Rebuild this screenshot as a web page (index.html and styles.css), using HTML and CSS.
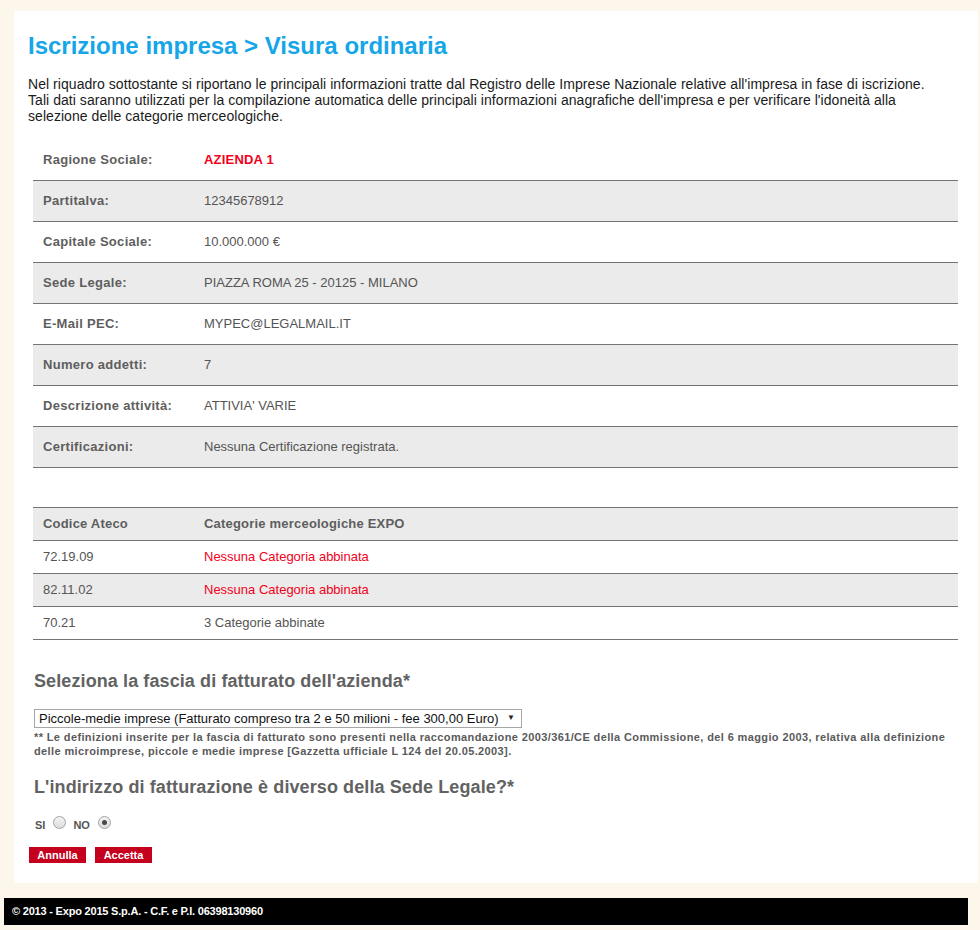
FILE: index.html
```html
<!DOCTYPE html>
<html lang="it">
<head>
<meta charset="utf-8">
<title>Iscrizione impresa &gt; Visura ordinaria</title>
<link rel="stylesheet" href="styles.css">
</head>
<body>
<div class="page">
  <div class="panel">
    <h1 class="title">Iscrizione impresa &gt; Visura ordinaria</h1>
    <p class="intro">Nel riquadro sottostante si riportano le principali informazioni tratte dal Registro delle Imprese Nazionale relative all'impresa in fase di iscrizione.<br>Tali dati saranno utilizzati per la compilazione automatica delle principali informazioni anagrafiche dell'impresa e per verificare l'idoneità alla selezione delle categorie merceologiche.</p>

    <table class="info">
      <tr><th>Ragione Sociale:</th><td class="red bold">AZIENDA 1</td></tr>
      <tr class="alt"><th>Partitalva:</th><td>12345678912</td></tr>
      <tr><th>Capitale Sociale:</th><td>10.000.000 €</td></tr>
      <tr class="alt"><th>Sede Legale:</th><td>PIAZZA ROMA 25 - 20125 - MILANO</td></tr>
      <tr><th>E-Mail PEC:</th><td>MYPEC@LEGALMAIL.IT</td></tr>
      <tr class="alt"><th>Numero addetti:</th><td>7</td></tr>
      <tr><th>Descrizione attività:</th><td>ATTIVIA' VARIE</td></tr>
      <tr class="alt"><th>Certificazioni:</th><td>Nessuna Certificazione registrata.</td></tr>
    </table>

    <table class="ateco">
      <tr class="head"><th>Codice Ateco</th><th>Categorie merceologiche EXPO</th></tr>
      <tr><td>72.19.09</td><td class="red">Nessuna Categoria abbinata</td></tr>
      <tr class="alt"><td>82.11.02</td><td class="red">Nessuna Categoria abbinata</td></tr>
      <tr><td>70.21</td><td>3 Categorie abbinate</td></tr>
    </table>

    <h2 class="section">Seleziona la fascia di fatturato dell'azienda*</h2>
    <div class="select-wrap">
      <select class="select">
        <option>Piccole-medie imprese (Fatturato compreso tra 2 e 50 milioni - fee 300,00 Euro)</option>
      </select>
    </div>
    <p class="note">** Le definizioni inserite per la fascia di fatturato sono presenti nella raccomandazione 2003/361/CE della Commissione, del 6 maggio 2003, relativa alla definizione delle microimprese, piccole e medie imprese [Gazzetta ufficiale L 124 del 20.05.2003].</p>

    <h2 class="section second">L'indirizzo di fatturazione è diverso della Sede Legale?*</h2>
    <div class="radios">
      <label class="radio-label">SI <input type="radio" name="diverso" class="radio"></label>
      <label class="radio-label">NO <input type="radio" name="diverso" class="radio" checked></label>
    </div>

    <div class="buttons">
      <button class="btn">Annulla</button>
      <button class="btn">Accetta</button>
    </div>
  </div>
  <div class="footer">© 2013 - Expo 2015 S.p.A. - C.F. e P.I. 06398130960</div>
</div>
</body>
</html>
```

FILE: styles.css
```css
* { box-sizing: border-box; }

html, body {
  margin: 0;
  padding: 0;
  background: #fdf6eb;
  font-family: "Liberation Sans", Arial, sans-serif;
}

.page {
  width: 980px;
  height: 930px;
  padding-top: 11px;
}

.panel {
  margin-left: 14px;
  width: 964px;
  height: 872px;
  background: #ffffff;
  padding: 21px 0 0 14px;
}

.title {
  margin: 0;
  font-size: 24px;
  font-weight: bold;
  color: #16a6e8;
  line-height: 27px;
}

.intro {
  margin: 17px 0 0 0;
  width: 920px;
  font-size: 14px;
  line-height: 16px;
  color: #1b1b1b;
  letter-spacing: 0.05px;
}

.info, .ateco {
  margin-left: 5px;
  width: 925px;
  border-collapse: collapse;
  font-size: 13px;
  color: #555;
}

.info {
  margin-top: 16px;
}

.info th, .info td,
.ateco th, .ateco td {
  text-align: left;
  padding: 0 10px;
  border-bottom: 1px solid #747474;
}

.info th, .info td {
  height: 41px;
}

.info th {
  width: 161px;
  font-weight: bold;
  letter-spacing: 0.3px;
  color: #5e5e5e;
}

.info tr:first-child th,
.info tr:first-child td {
  height: 40px;
}

.alt, .head {
  background: #ebebeb;
}

.ateco {
  margin-top: 39px;
  border-top: 1px solid #747474;
}

.ateco th, .ateco td {
  height: 33px;
}

.ateco th {
  font-weight: bold;
  width: 161px;
  letter-spacing: 0.2px;
  color: #5e5e5e;
}

.ateco th + th {
  width: auto;
}

.red { color: #f2001a; }
.bold { font-weight: bold; letter-spacing: 0.2px; }

.section {
  margin: 31px 0 0 6px;
  font-size: 18px;
  line-height: 21px;
  font-weight: bold;
  color: #626262;
  letter-spacing: 0.1px;
}

.section.second {
  margin-top: 19px;
}

.select-wrap {
  position: relative;
  margin: 17px 0 0 6px;
  width: 488px;
  height: 19px;
}

.select {
  appearance: none;
  -webkit-appearance: none;
  width: 488px;
  height: 19px;
  margin: 0;
  padding: 0 0 0 4px;
  border: 1px solid #a6a6a6;
  border-radius: 0;
  background: #fff;
  font-family: "Liberation Sans", Arial, sans-serif;
  font-size: 13px;
  color: #111;
}

.select-wrap::after {
  content: "▼";
  position: absolute;
  right: 7px;
  top: 4px;
  font-size: 8px;
  color: #222;
  pointer-events: none;
}

.note {
  margin: 2px 0 0 6px;
  width: 925px;
  font-size: 11px;
  line-height: 14px;
  font-weight: bold;
  color: #5a5a5a;
  letter-spacing: 0.38px;
}

.radios {
  margin: 18px 0 0 7px;
  display: flex;
  align-items: center;
  gap: 7px;
  font-size: 11px;
  font-weight: bold;
  color: #555;
}

.radio-label {
  display: inline-flex;
  align-items: center;
  gap: 8px;
}

.radio {
  appearance: none;
  -webkit-appearance: none;
  margin: 0 0 5px 0;
  width: 13px;
  height: 13px;
  border-radius: 50%;
  border: 1px solid #a2a2a2;
  background: linear-gradient(#f4f4f4, #dcdcdc);
  position: relative;
}

.radio:checked::after {
  content: "";
  position: absolute;
  left: 3px;
  top: 3px;
  width: 5px;
  height: 5px;
  border-radius: 50%;
  background: #4a4a4a;
}

.buttons {
  margin: 13px 0 0 1px;
  display: flex;
  gap: 9px;
}

.btn {
  width: 57px;
  height: 16px;
  padding: 0;
  border: 0;
  border-radius: 0;
  background: #c4001e;
  color: #fff;
  font-family: "Liberation Sans", Arial, sans-serif;
  font-size: 11px;
  font-weight: bold;
  line-height: 16px;
}

.footer {
  margin: 15px 0 0 4px;
  width: 964px;
  height: 27px;
  background: #000;
  color: #fff;
  font-size: 11px;
  font-weight: bold;
  line-height: 27px;
  padding-left: 8px;
  letter-spacing: -0.2px;
}
```
